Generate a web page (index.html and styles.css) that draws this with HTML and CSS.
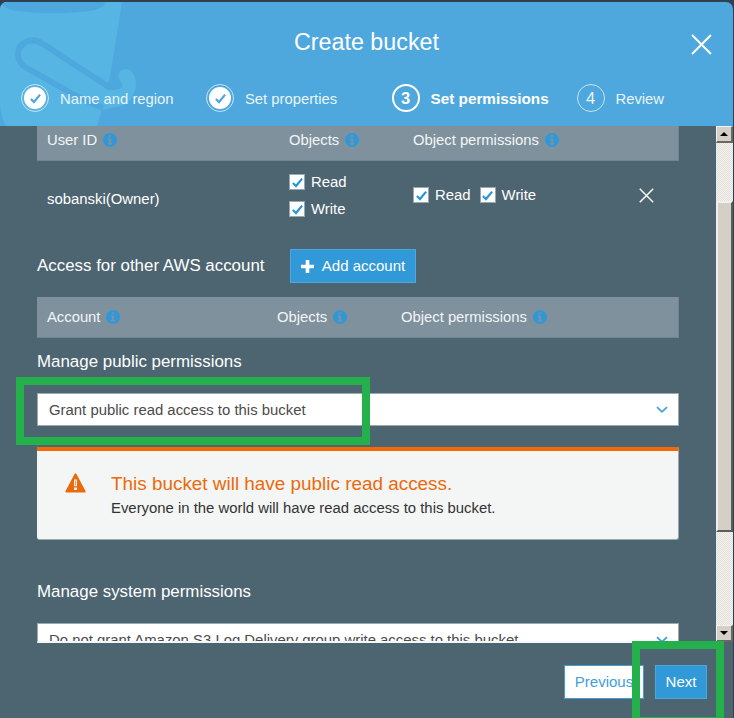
FILE: index.html
```html
<!DOCTYPE html>
<html lang="en">
<head>
<meta charset="utf-8">
<title>Create bucket</title>
<link rel="stylesheet" href="styles.css">
</head>
<body>
<svg width="0" height="0" class="defs" aria-hidden="true">
  <symbol id="info" viewBox="0 0 14 14"><circle cx="7" cy="7" r="7" fill="#3098d8"/><path d="M5.7 2.3h2.4v1.9H5.7zM5 5.6h3.1v4.5H9v1.3H5v-1.3h.9V6.9H5z" fill="#7e919c"/></symbol>
  <symbol id="tick" viewBox="0 0 10 10"><path d="M.8 5.5 3.6 8.2 9.2 1.5" fill="none" stroke="currentColor" stroke-width="2"/></symbol>
  <symbol id="cross" viewBox="0 0 20 20"><path d="M1 1 19 19M19 1 1 19" fill="none" stroke="currentColor" stroke-width="1.9"/></symbol>
  <symbol id="chevron" viewBox="0 0 12 8"><path d="M1 1.2 6 5.8 11 1.2" fill="none" stroke="#3fa0dc" stroke-width="1.8"/></symbol>
</svg>
<div class="dialog">
  <header class="header">
    <svg class="bucket" width="140" height="124" viewBox="0 0 140 124">
      <path d="M0 0H122L109 80Q117 80 118 74Q120 67 126 67Q136 69 136 84Q132 105 114 105L102 108L97 124H6Q0 114 0 102Z" fill="#57b5e4"/>
      <path d="M2 0H105Q105 8 80 10Q48 13 18 9Q2 7 2 0Z" fill="#4ea8dd"/>
      <path d="M109 85L43 42C30 33 18 43 18 52C18 62 26 66 32 69L62 86Q82 98 103 106" fill="none" stroke="#4ea8dd" stroke-width="6"/>
      <path d="M108 80Q116 80 118 74L123 85Q115 91 104 86Z" fill="#4ea8dd"/>
    </svg>
    <h1 class="title">Create bucket</h1>
    <button class="close" aria-label="Close"><svg width="21" height="21"><use href="#cross"/></svg></button>
    <ol class="steps">
      <li class="step"><span class="ring done"><b><svg width="11" height="11"><use href="#tick"/></svg></b></span><span>Name and region</span></li>
      <li class="step"><span class="ring done"><b><svg width="11" height="11"><use href="#tick"/></svg></b></span><span>Set properties</span></li>
      <li class="step current"><span class="ring">3</span><span>Set permissions</span></li>
      <li class="step"><span class="ring">4</span><span>Review</span></li>
    </ol>
  </header>

  <div class="viewport">
    <main class="content">
      <div class="row head first"><span>User ID <svg class="i"><use href="#info"/></svg></span><span>Objects <svg class="i"><use href="#info"/></svg></span><span>Object permissions <svg class="i"><use href="#info"/></svg></span></div>
      <div class="row owner">
        <span class="name">sobanski(Owner)</span>
        <span class="checks stacked">
          <label><i class="box"><svg width="11" height="11"><use href="#tick"/></svg></i>Read</label>
          <label><i class="box"><svg width="11" height="11"><use href="#tick"/></svg></i>Write</label>
        </span>
        <span class="checks">
          <label><i class="box"><svg width="11" height="11"><use href="#tick"/></svg></i>Read</label>
          <label><i class="box"><svg width="11" height="11"><use href="#tick"/></svg></i>Write</label>
        </span>
        <svg class="remove" width="15" height="15"><use href="#cross"/></svg>
      </div>
      <div class="other">
        <h2 class="access">Access for other AWS account</h2>
        <button class="btn add"><svg width="13" height="13" viewBox="0 0 13 13"><path d="M6.5 0v13M0 6.5h13" stroke="#fff" stroke-width="3.6"/></svg>Add account</button>
      </div>
      <div class="row head second"><span>Account <svg class="i"><use href="#info"/></svg></span><span>Objects <svg class="i"><use href="#info"/></svg></span><span>Object permissions <svg class="i"><use href="#info"/></svg></span></div>
      <h2 class="public">Manage public permissions</h2>
      <div class="select"><span>Grant public read access to this bucket</span><svg width="12" height="8"><use href="#chevron"/></svg></div>
      <div class="alert">
        <svg width="21" height="20" viewBox="0 0 21 20"><path d="M10.5 1.2 19.8 18.6H1.2Z" fill="#eb6a0b" stroke="#eb6a0b" stroke-width="1.8" stroke-linejoin="round"/><path d="M9 6.5h3v6.8H9zM9 14.4h3v2.7H9z" fill="#f4f6f5"/><path d="M10 7.3h1v5.2h-1z" fill="#f1a066"/></svg>
        <div><strong>This bucket will have public read access.</strong><p>Everyone in the world will have read access to this bucket.</p></div>
      </div>
      <h2 class="system">Manage system permissions</h2>
      <div class="select clipped"><span>Do not grant Amazon S3 Log Delivery group write access to this bucket</span><svg width="12" height="8"><use href="#chevron"/></svg></div>
    </main>
    <div class="scrollbar">
      <div class="arrow"><svg width="8" height="4"><path d="M0 4 4 0 8 4Z"/></svg></div>
      <div class="thumb"></div>
      <div class="arrow down"><svg width="8" height="4"><path d="M0 0H8L4 4Z"/></svg></div>
    </div>
  </div>

  <footer class="footer">
    <button class="btn previous">Previous</button>
    <button class="btn next">Next</button>
  </footer>
  <div class="mark mark-select"></div>
  <div class="mark mark-next"></div>
</div>
</body>
</html>
```
FILE: styles.css
```css
* { box-sizing: border-box; }
body { margin: 0; background: #2f4050; font: 15px/20px "Liberation Sans", Arial, sans-serif; color: #fff; }
.defs { position: absolute; }
svg { display: block; flex: none; }
h1, h2, p, ol { margin: 0; padding: 0; font-weight: 400; }
button { font: inherit; border: 0; padding: 0; }
.dialog { position: relative; width: 734px; height: 718px; padding-top: 2px; overflow: hidden; display: flex; flex-direction: column; }
.header { position: relative; width: 733px; height: 124px; background: #4ea8dd; border-radius: 7px 7px 0 0; overflow: hidden; }
.bucket { position: absolute; left: 0; top: 0; }
.title { position: relative; padding-top: 26px; font-size: 23.3px; line-height: 28px; text-align: center; }
.close { position: absolute; left: 691px; top: 32px; background: none; color: #fff; }
.steps { position: relative; display: grid; grid-template-columns: 185px 185.5px 185px 1fr; list-style: none; padding: 28px 0 0 21px; }
.step { display: flex; align-items: center; gap: 11px; height: 28px; font-size: 14.8px; color: #e9f5fc; }
.step > span:last-child { padding-top: 1px; }
.ring { width: 28px; height: 28px; border: 1.5px solid #c7e4f5; border-radius: 50%; display: flex; align-items: center; justify-content: center; font-size: 16.5px; }
.ring b { width: 22px; height: 22px; border-radius: 50%; background: #fff; color: #4ea8dd; display: flex; align-items: center; justify-content: center; }
.current { font-weight: 700; color: #fff; font-size: 15.3px; }
.current .ring { border: 2px solid #fff; }
.viewport { display: flex; height: 517px; width: 733px; overflow: hidden; background: #4d6471; }
.content { width: 716px; height: 517px; overflow: hidden; padding: 0 37px; }
.row { display: grid; grid-template-columns: 242px 124px 1fr 15px; padding-left: 10px; width: 642px; }
.head { background: #7e919c; border: 1px solid #718590; border-width: 0 1px 1px 0; color: #f4f6f7; font-size: 14.8px; }
.head span { display: flex; align-items: center; gap: 6px; }
.i { width: 14px; height: 14px; }
.first { height: 35px; padding-bottom: 6px; }
.second { height: 41px; grid-template-columns: 230px 124px 1fr; }
.owner { height: 88px; padding-right: 25px; font-size: 14.9px; }
.name { padding-top: 28px; }
.checks { display: flex; gap: 9px; padding-top: 24px; }
.checks.stacked { flex-direction: column; gap: 7px; padding-top: 11px; }
.checks label { display: flex; gap: 6px; height: 20px; align-items: center; }
.box { width: 16px; height: 16px; border: 1px solid #99a7af; background: #fff; color: #2695dc; display: flex; align-items: center; justify-content: center; }
.remove { margin-top: 27px; }
.other { height: 48px; display: flex; align-items: flex-start; }
h2 { font-size: 16.9px; }
.access { width: 253px; padding-top: 7px; }
.btn { display: flex; align-items: center; justify-content: center; height: 34px; background: #3199d8; color: #fff; border: 1px solid #4aa9e0; }
.add { width: 126px; gap: 8px; }
.public { padding-top: 14px; height: 55px; }
.select { display: flex; align-items: center; justify-content: space-between; width: 642px; height: 33px; padding: 0 10px 0 11px; background: #fff; border: 1px solid #9ba8af; color: #4b4b4b; font-size: 14.9px; }
.clipped { height: 20px; align-items: flex-start; border-bottom: 2px solid #f4f6f7; overflow: hidden; }
.clipped span { padding-top: 6px; }
.clipped svg { margin-top: 12px; }
.alert { display: flex; gap: 25px; width: 642px; height: 93px; margin-top: 21px; padding: 21px 28px; background: #f4f6f5; border-top: 4px solid #f26a05; border-bottom: 1px solid #9aa8af; border-right: 1px solid #9aa8af; border-radius: 0 0 3px 3px; color: #333; font-size: 14.88px; }
.alert svg { margin-top: 1px; }
.alert strong { display: block; color: #eb6a0b; font-size: 18.9px; font-weight: 400; line-height: 24px; }
.alert p { padding-top: 2px; }
.system { padding-top: 42px; height: 83px; }
.scrollbar { width: 17px; height: 516px; display: flex; flex-direction: column; background: repeating-conic-gradient(#f2f2ee 0 25%, #e2e0da 0 50%) 0 0 / 2px 2px; }
.arrow { width: 17px; height: 17px; display: flex; align-items: center; justify-content: center; background: #d4d0c8; border: 1px solid #f5f3ef; border-right: 2px solid #696862; border-bottom: 2px solid #696862; }
.thumb { height: 331px; margin-top: 58px; background: #d4d0c8; border: 2px solid #f2f0ed; border-right-color: #5b5d59; border-bottom-color: #5b5d59; }
.down { margin-top: auto; }
.footer { width: 733px; height: 75px; background: #4d6471; display: flex; align-items: flex-start; justify-content: flex-end; gap: 11px; padding: 22px 26px 0 0; font-size: 15px; }
.previous { width: 80px; background: #fff; color: #3f9eda; border-color: #3f9eda; }
.next { width: 52px; }
.mark { position: absolute; border: 8px solid #24b14c; }
.mark-select { left: 16px; top: 377px; width: 354px; height: 68px; }
.mark-next { left: 632px; top: 641px; width: 92px; height: 84px; }
```
